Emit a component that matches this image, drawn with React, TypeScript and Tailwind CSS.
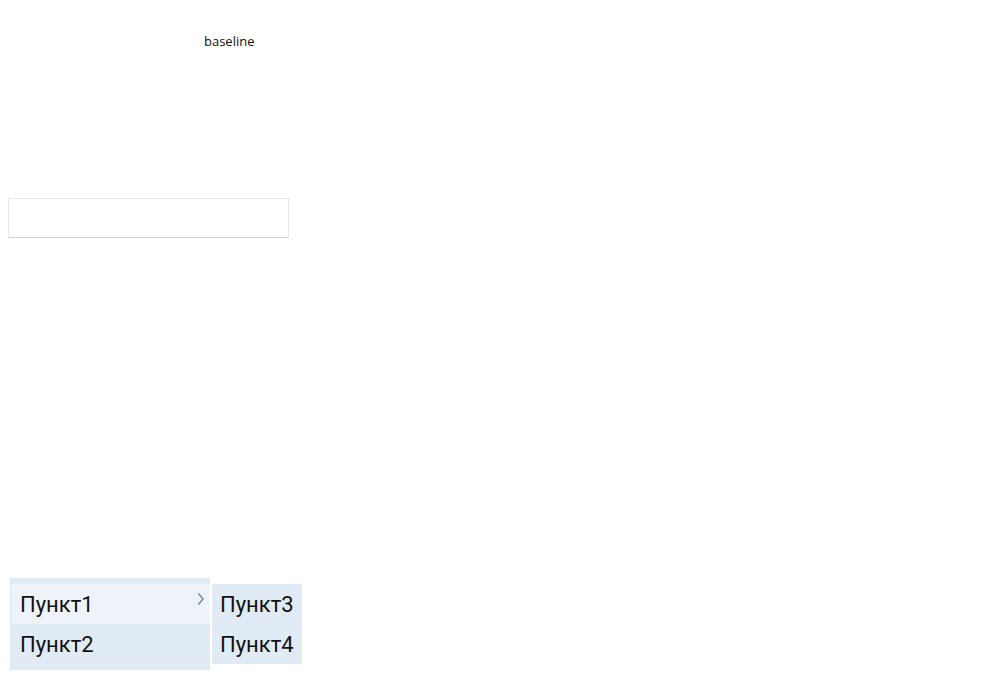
export default function App() {
  return (
    <div className="relative w-[1008px] h-[675px] bg-white" style={{ fontFamily: "Roboto, sans-serif" }}>
      <div className="pt-[29px] pl-[204px] h-[198px]">
        <span className="text-[13px] leading-[16px] text-[#111] font-['Open_Sans',sans-serif]">baseline</span>
      </div>
      <div className="ml-[8px] w-[281px] h-[40px] border border-[#e6e6e6] border-b-[#d0d0d0]" />
      <div className="absolute left-[10px] top-[578px] flex items-start gap-[2px]">
        <div className="w-[200px] bg-[#e1ebf5] py-[6px] pl-px">
          <div className="h-[40px] bg-[#eef3fa] flex items-center justify-between pl-[9px] pr-[5px] pt-px text-[22px] text-[#111]">
            <span>Пункт1</span>
            <svg width="8" height="14" viewBox="0 0 8 14" className="-mt-[11px]">
              <path d="M1.5 1.5 L6 7 L1.5 12.5" fill="none" stroke="#6f7fa0" strokeWidth="1.3" />
            </svg>
          </div>
          <div className="h-[40px] flex items-center pl-[9px] pt-px text-[22px] text-[#111]">Пункт2</div>
        </div>
        <div className="mt-[6px] w-[90px] bg-[#e1ebf5]">
          <div className="h-[40px] flex items-center pl-[8px] pt-px text-[22px] text-[#111]">Пункт3</div>
          <div className="h-[40px] flex items-center pl-[8px] pt-px text-[22px] text-[#111]">Пункт4</div>
        </div>
      </div>
    </div>
  );
}
